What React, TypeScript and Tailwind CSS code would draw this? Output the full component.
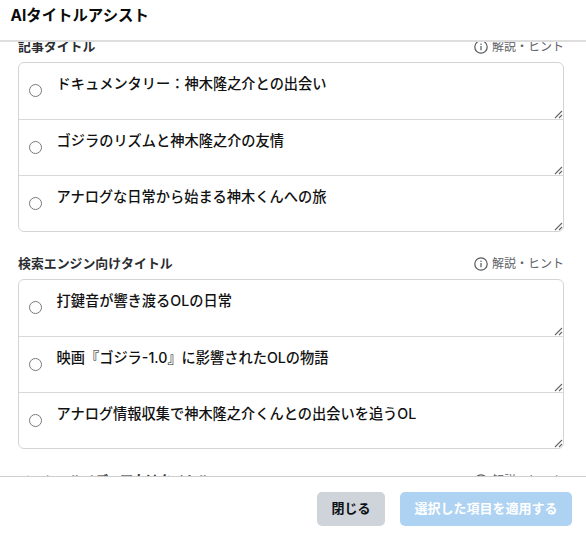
const sections = [
  {
    title: "記事タイトル",
    items: [
      "ドキュメンタリー：神木隆之介との出会い",
      "ゴジラのリズムと神木隆之介の友情",
      "アナログな日常から始まる神木くんへの旅",
    ],
  },
  {
    title: "検索エンジン向けタイトル",
    items: [
      "打鍵音が響き渡るOLの日常",
      "映画『ゴジラ-1.0』に影響されたOLの物語",
      "アナログ情報収集で神木隆之介くんとの出会いを追うOL",
    ],
  },
  { title: "ソーシャルメディア向けタイトル", items: [] },
];

function InfoIcon() {
  return (
    <svg className="size-[14px] shrink-0" viewBox="0 0 14 14" fill="none" stroke="#55585d" strokeWidth="1.2">
      <circle cx="7" cy="7" r="6.2" />
      <path d="M7 6V10.2" />
      <circle cx="7" cy="4.3" r="0.75" fill="#55585d" stroke="none" />
    </svg>
  );
}

function ResizeHandle() {
  return (
    <svg className="size-[9px] shrink-0 self-end" viewBox="0 0 9 9" fill="none" stroke="#666" strokeWidth="1.1">
      <path d="M1 8L8 1M5 8L8 5" />
    </svg>
  );
}

function Row({ text }: { text: string }) {
  return (
    <label className="flex h-[56px] border-b border-[#d8d8d8] pl-[10px] first:h-[57px] last:h-[55px] last:border-b-0">
      <span className="mt-[21px] size-[13px] shrink-0 rounded-full border border-[#7a7a7a] bg-white" />
      <span className="ml-[14.5px] mt-[11px] grow whitespace-nowrap text-[14.22px] leading-[20px] font-medium text-[#111]">
        {text}
      </span>
      <ResizeHandle />
    </label>
  );
}

function Section({ title, items }: { title: string; items: string[] }) {
  return (
    <section className="h-[217px] shrink-0">
      <div className="flex h-[24px] items-start justify-between">
        <h2 className="text-[12.9px] leading-[18px] font-bold whitespace-nowrap text-[#2b2d31]">{title}</h2>
        <div className="flex items-center gap-[4px] text-[12px] leading-[18px] text-[#5f6368]">
          <InfoIcon />
          <span>解説・ヒント</span>
        </div>
      </div>
      {items.length > 0 && (
        <div className="h-[170px] overflow-hidden rounded-[6px] border border-[#d4d4d4]">
          {items.map((t) => (
            <Row key={t} text={t} />
          ))}
        </div>
      )}
    </section>
  );
}

export default function App() {
  return (
    <div className="flex h-[537px] w-[586px] flex-col overflow-hidden bg-white font-[Inter,'Noto_Sans_CJK_JP',sans-serif]">
      <header className="flex h-[42px] shrink-0 items-start border-b-2 border-[#dedede] pt-[6px] pl-[10.5px]">
        <h1 className="text-[15.4px] leading-[20px] font-bold text-[#0a0a0a]">AIタイトルアシスト</h1>
      </header>
      <main className="h-[434px] shrink-0 overflow-hidden pr-[22px] pl-[18px]">
        <div className="-mt-[4px] flex flex-col">
          {sections.map((s) => (
            <Section key={s.title} {...s} />
          ))}
        </div>
      </main>
      <footer className="flex grow items-start justify-end gap-[15px] border-t border-[#cfcfcf] pt-[15px] pr-[14px]">
        <button className="h-[34px] w-[68px] rounded-[5px] bg-[#ced4da] text-[13px] font-bold whitespace-nowrap text-[#0c0f14]">
          閉じる
        </button>
        <button className="h-[34px] w-[172px] rounded-[5px] bg-[#add2f2] text-[13px] font-bold whitespace-nowrap text-white">
          選択した項目を適用する
        </button>
      </footer>
    </div>
  );
}
